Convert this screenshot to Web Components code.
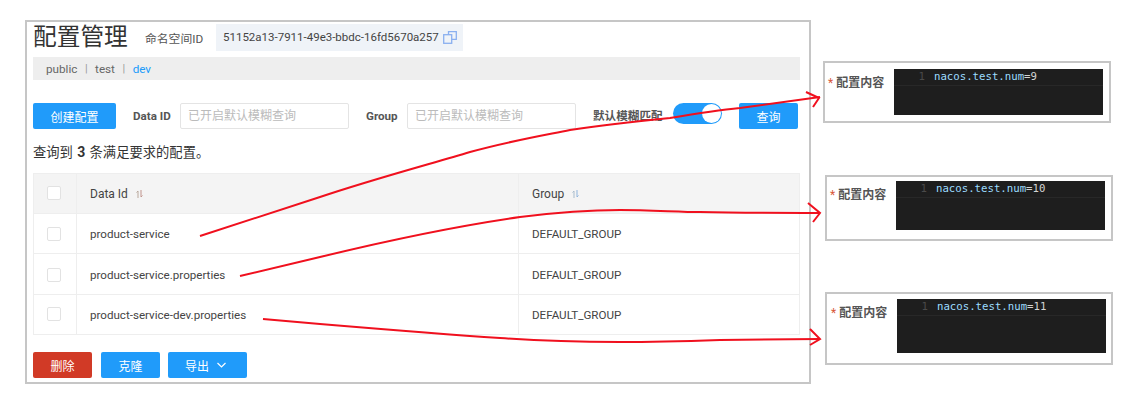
<!DOCTYPE html>
<html lang="zh">
<head>
<meta charset="utf-8">
<title>配置管理</title>
<style>
  html, body { margin: 0; background: #fff; }
  body { font-family: Roboto, "Noto Sans CJK SC", sans-serif; color: #333; width: 1146px; height: 406px; overflow: hidden; }
</style>
</head>
<body>
<config-page>
  <config-list slot="main"></config-list>
  <content-card slot="side" value="9" style="margin: 41px 0 0 12px" h="62" eh="46" et="6"></content-card>
  <content-card slot="side" value="10" style="margin: 52px 0 0 14px" h="66" eh="49" et="4"></content-card>
  <content-card slot="side" value="11" style="margin: 51px 0 0 14px; padding-left: 4px; padding-right: 5px" h="73" eh="54" et="5"></content-card>
</config-page>
<arrow-overlay></arrow-overlay>

<script>
  // ─── page frame ────────────────────────────────────────────────────────────
  class ConfigPage extends HTMLElement {
    connectedCallback () {
      this.attachShadow({ mode: 'open' }).innerHTML = `
        <style>
          :host { display: flex; align-items: flex-start; padding: 20px 0 0 25px; }
          .side { display: flex; flex-direction: column; }
        </style>
        <slot name="main"></slot>
        <div class="side"><slot name="side"></slot></div>`;
    }
  }

  // ─── buttons ───────────────────────────────────────────────────────────────
  class NcButton extends HTMLElement {
    connectedCallback () {
      const red = this.hasAttribute('danger');
      this.attachShadow({ mode: 'open' }).innerHTML = `
        <style>
          :host { display: inline-flex; align-items: center; justify-content: center; gap: 8px;
                  box-sizing: border-box; height: 26px; border-radius: 2px; font-size: 12px; white-space: nowrap;
                  background: ${red ? '#d13a26' : '#209bfa'}; color: #fff; }
        </style>
        <slot></slot>`;
    }
  }

  // ─── sort arrows in the table head ─────────────────────────────────────────
  class SortIcon extends HTMLElement {
    connectedCallback () {
      this.attachShadow({ mode: 'open' }).innerHTML = `
        <style>:host { display: inline-block; width: 7px; height: 8px; margin-left: 8px; } svg { display: block; }</style>
        <svg width="7" height="8" viewBox="0 0 7 8" fill="none" stroke-width="1">
          <path d="M2 8V1L.5 2.5" stroke="${this.getAttribute('a') || '#b9b9b9'}"/>
          <path d="M5 0v7l1.500-1.500" stroke="${this.getAttribute('b') || '#c9c9c9'}"/>
        </svg>`;
    }
  }

  // ─── main list panel ───────────────────────────────────────────────────────
  class ConfigList extends HTMLElement {
    connectedCallback () {
      this.attachShadow({ mode: 'open' }).innerHTML = `
        <style>
          :host { display: block; box-sizing: border-box; width: 786px; height: 364px;
                  border: 2px solid #c6c6c6; padding: 0 9px 0 6px; flex: none; font-size: 12px; color: #444; }
          .head { display: flex; align-items: center; height: 28px; margin-top: 1px; }
          h1 { margin: 0 17px 0 0; width: 95px; flex: none; white-space: nowrap; font-size: 23.700px; font-weight: 400; color: #333; line-height: 28px; }
          .ns-label { width: 58px; flex: none; white-space: nowrap; font-size: 11.800px; color: #555; margin-right: 13px; }
          .ns { display: flex; align-items: center; justify-content: space-between; height: 27px; padding: 0 6px 0 7px; background: #eff3f8;
                font-size: 11.500px; color: #444; width: 234px; white-space: nowrap; }
          .tabs { display: flex; align-items: center; height: 23px; margin-top: 6px; padding-left: 13px;
                  background: #eee; color: #666; font-size: 11.700px; }
          .tabs i { font-style: normal; color: #999; margin: 0 7.500px; font-size: 11px; }
          .tabs b { font-weight: 400; color: #209bfa; }
          .search { display: flex; align-items: flex-start; height: 27px; margin-top: 23px; }
          label { font-weight: 700; color: #555; line-height: 26px; margin-left: 17px; white-space: nowrap; flex: none; font-size: 11.600px; }
          .field { box-sizing: border-box; width: 169px; height: 26px; border: 1px solid #e4e4e4; border-radius: 2px;
                   padding-left: 7px; line-height: 24px; color: #bbb; font-size: 12px; white-space: nowrap; flex: none; }
          .switch { box-sizing: border-box; position: relative; width: 49px; height: 21px; border-radius: 11px; flex: none;
                    background: #209bfa; margin-right: 17px; }
          .switch::after { content: ""; position: absolute; right: 1px; top: 1px; width: 19px; height: 19px;
                           border-radius: 50%; background: #fff; }
          .count { margin-top: 13px; font-size: 13.300px; line-height: 18px; color: #333; }
          .count b { font-size: 14px; margin: 0 1px; }
          .grid { display: grid; grid-template-columns: 43px 442px 282px; margin-top: 11px;
                  font-size: 11.600px; color: #444; }
          .grid > div { display: flex; align-items: center; box-sizing: border-box; height: 40px;
                        padding: 1px 0 0 13px; border-bottom: 1px solid #eee; border-left: 1px solid #eee; }
          .grid > div:nth-child(3n) { border-right: 1px solid #eee; }
          .grid > .th { height: 41px; background: #f4f4f4; border-top: 1px solid #eee; color: #444; padding-top: 0; font-size: 12px; }
          .grid > .row-4 { height: 41px; }
          .grid > .chk { padding: 1px 0 0 13px; }
          .grid > .th.chk { padding: 0 0 1px 13px; }
          .grid > .last.chk { padding: 0 0 1px 13px; }
          .box { box-sizing: border-box; width: 14px; height: 14px; border: 1px solid #e2e2e2; border-radius: 2px; background: #fff; }
          .actions { display: flex; gap: 9px; margin-top: 17px; }
          .chev { width: 9px; height: 6px; flex: none; }
        </style>
        <div class="head">
          <h1>配置管理</h1>
          <span class="ns-label">命名空间ID</span>
          <div class="ns"><span>51152a13-7911-49e3-bbdc-16fd5670a257</span>
            <svg width="14" height="13" viewBox="0 0 14 13" fill="none" stroke="#8ab0f0" stroke-width="1.300" style="flex:none">
              <rect x=".7" y="3.700" width="8" height="8.600"/>
              <path d="M5.500 3.500V.7h7.800v7.600H9"/>
            </svg>
          </div>
        </div>
        <div class="tabs">public<i>|</i>test<i>|</i><b>dev</b></div>
        <div class="search">
          <nc-button style="width:83px">创建配置</nc-button>
          <label style="width:47px">Data ID</label>
          <div class="field">已开启默认模糊查询</div>
          <label style="width:41px">Group</label>
          <div class="field">已开启默认模糊查询</div>
          <label style="width:80px">默认模糊匹配</label>
          <div class="switch"></div>
          <nc-button style="width:59px">查询</nc-button>
        </div>
        <div class="count">查询到 <b>3</b> 条满足要求的配置。</div>
        <div class="grid">
          <div class="th chk"><span class="box"></span></div>
          <div class="th">Data Id<sort-icon a="#b9a89c" b="#c0948c"></sort-icon></div>
          <div class="th">Group<sort-icon a="#a9bccc" b="#8fb4dc"></sort-icon></div>
          <div class="chk"><span class="box"></span></div><div>product-service</div><div>DEFAULT_GROUP</div>
          <div class="chk row-4"><span class="box"></span></div><div class="row-4">product-service.properties</div><div class="row-4">DEFAULT_GROUP</div>
          <div class="chk last"><span class="box"></span></div><div>product-service-dev.properties</div><div>DEFAULT_GROUP</div>
        </div>
        <div class="actions">
          <nc-button danger style="width:59px">删除</nc-button>
          <nc-button style="width:59px">克隆</nc-button>
          <nc-button style="width:79px;margin-left:-1px;padding-right:4px">导出
            <svg class="chev" viewBox="0 0 9 6" fill="none" stroke="#fff" stroke-width="1.200"><path d="M.5 1l4 4 4-4"/></svg>
          </nc-button>
        </div>`;
    }
  }

  // ─── config content snippet on the right ───────────────────────────────────
  class ContentCard extends HTMLElement {
    connectedCallback () {
      const h = this.getAttribute('h'), eh = this.getAttribute('eh'), et = this.getAttribute('et');
      this.attachShadow({ mode: 'open' }).innerHTML = `
        <style>
          :host { display: flex; box-sizing: border-box; width: 288px; height: ${h}px; border: 2px solid #c6c6c6;
                  padding: ${et}px 6px 0 3px; font-size: 12px; color: #555; }
          .label { width: 66px; flex: none; font-weight: 700; padding-top: 6px; line-height: 16px; white-space: nowrap; }
          .label i { font-style: normal; color: #d8583a; margin-right: 0; font-weight: 400; }
          .editor { flex: 1; height: ${eh}px; background: #1e1e1e; }
          .line { display: flex; height: 16px; border-bottom: 1px solid #282828;
                  font: 10.700px/16px "DejaVu Sans Mono", monospace; color: #d4d4d4; }
          .no { width: 40px; flex: none; text-align: right; padding-right: 9px; box-sizing: border-box; color: #4a4a4a; }
          .key { color: #9cdcfe; }
        </style>
        <div class="label"><i>*</i> 配置内容</div>
        <div class="editor"><div class="line"><span class="no">1</span><span><span class="key">nacos.test.num</span>=${this.getAttribute('value')}</span></div></div>`;
    }
  }

  // ─── hand drawn red arrows lying over everything ───────────────────────────
  class ArrowOverlay extends HTMLElement {
    connectedCallback () {
      this.attachShadow({ mode: 'open' }).innerHTML = `
        <style>:host { position: absolute; left: 0; top: 0; pointer-events: none; } svg { display: block; }</style>
        <svg width="1146" height="406" fill="none" stroke="#f0101e" stroke-width="2">
          <path d="M200 236L320 197C370 180 430 164 470 152C510 141 540 136 570 130C610 124 640 121 670 118C700 113 720 110 740 108L820 97"/>
          <path d="M806 92L819 98L813 107"/>
          <path d="M240 276L320 257C390 240 450 227 520 217C560 212 590 210 620 210C650 210 680 212 700 212C740 213 780 213 820 213"/>
          <path d="M808 203L820 213L813 222"/>
          <path d="M263 319L320 324C380 329 440 334 500 338C540 341 580 342 620 342C660 342 690 341 720 340L820 339"/>
          <path d="M810 329L820 339L810 345"/>
        </svg>`;
    }
  }

  customElements.define('config-page', ConfigPage);
  customElements.define('nc-button', NcButton);
  customElements.define('sort-icon', SortIcon);
  customElements.define('config-list', ConfigList);
  customElements.define('content-card', ContentCard);
  customElements.define('arrow-overlay', ArrowOverlay);
</script>
</body>
</html>
